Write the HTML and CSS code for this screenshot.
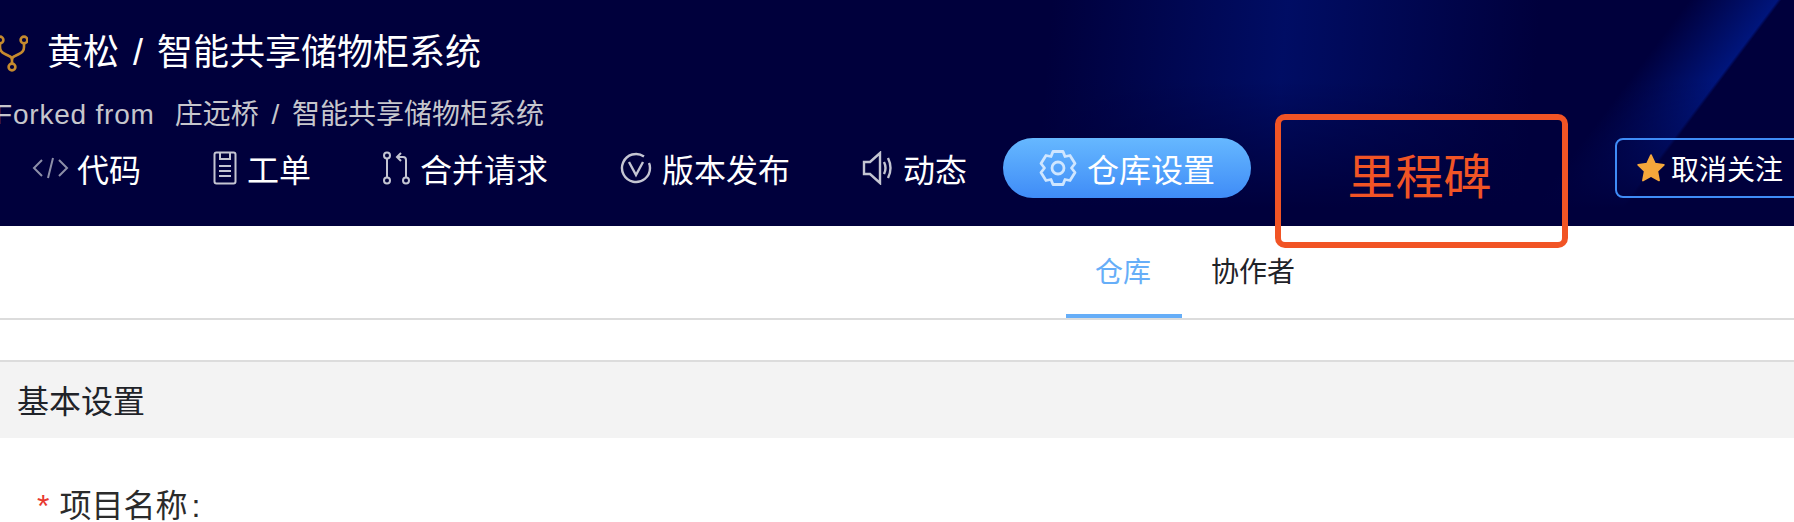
FILE: index.html
```html
<!DOCTYPE html>
<html lang="zh-CN">
<head>
    <meta charset="UTF-8">
    <meta name="viewport" content="width=device-width, initial-scale=1.0">
    <title>仓库设置</title>
    <link rel="stylesheet" href="styles.css">
</head>
<body>
    <header class="repo-header">
        <div class="repo-title">
            <svg class="fork-icon" viewBox="0 0 32 40" fill="none" stroke="#c58a2e" stroke-width="2.6">
                <circle cx="4" cy="6" r="3.4"/>
                <circle cx="28" cy="6" r="3.4"/>
                <circle cx="16" cy="33" r="3.4"/>
                <path d="M4 10v3q0 5 5 7l4 2q3 1 3 4v3M28 10v3q0 5-5 7l-4 2q-3 1-3 4"/>
            </svg>
            <span>黄松 / 智能共享储物柜系统</span>
        </div>
        <div class="repo-fork"><span class="fork-label">Forked from</span><span class="fork-name">庄远桥 / 智能共享储物柜系统</span></div>
        <nav class="repo-nav">
            <a class="nav-item">
                <svg class="nav-icon icon-code" viewBox="0 0 37 24" fill="none" stroke="#8d8fa8" stroke-width="2">
                    <path d="M10 4 2 12l8 8M27 4l8 8-8 8M21 2l-5 20"/>
                </svg>
                代码
            </a>
            <a class="nav-item">
                <svg class="nav-icon icon-issue" viewBox="0 0 24 34" fill="none" stroke="#c4c5d2" stroke-width="2">
                    <rect x="1.5" y="1.5" width="21" height="31" rx="2"/>
                    <path d="M7 2v6h10V2M6 15h12M6 20h12M6 25h12"/>
                </svg>
                工单
            </a>
            <a class="nav-item">
                <svg class="nav-icon icon-merge" viewBox="0 0 27 34" fill="none" stroke="#c4c5d2" stroke-width="2">
                    <circle cx="4" cy="4.500" r="3"/>
                    <circle cx="4" cy="29.500" r="3"/>
                    <circle cx="23" cy="29.500" r="3"/>
                    <path d="M4 8v18M23 26V9q0-3-3-3h-5M18 2l-4 4 4 4"/>
                </svg>
                合并请求
            </a>
            <a class="nav-item">
                <svg class="nav-icon icon-version" viewBox="0 0 32 32" fill="none" stroke="#c4c5d2" stroke-width="2.400">
                    <path d="M24 4.500A14 14 0 1 0 30 16q0-3-1-5"/>
                    <path d="M9 10l7 13 7-13"/>
                </svg>
                版本发布
            </a>
            <a class="nav-item">
                <svg class="nav-icon icon-sound" viewBox="0 0 31 34" fill="none" stroke="#c4c5d2" stroke-width="2.400">
                    <path d="M2 11h6L18 2v30L8 23H2z"/>
                    <path d="M22 11q3 6 0 12M26 7q5 10 0 20"/>
                </svg>
                动态
            </a>
            <a class="nav-item nav-item-active">
                <svg class="nav-icon icon-gear" viewBox="0 0 38 38" fill="none" stroke="#cfe6ff" stroke-width="2.800">
                    <path d="M14 2.500h10l2 5 5-1 5 8-3.500 4.500 3.500 4.500-5 8-5-1-2 5H14l-2-5-5 1-5-8 3.500-4.500L2 14.500l5-8 5 1z" stroke-linejoin="round"/>
                    <circle cx="19" cy="19" r="6"/>
                </svg>
                仓库设置
            </a>
            <a class="follow-btn">
                <svg class="star-icon" viewBox="0 0 24 24"><path d="M12 1l3.400 7.300 7.600 1-5.600 5.400 1.500 8L12 18.800 5.100 22.700l1.500-8L1 9.300l7.600-1z" fill="#f5a73b" stroke="#f5a73b" stroke-width="1.500" stroke-linejoin="round"/></svg>
                取消关注
            </a>
        </nav>
    </header>

    <div class="tabs">
        <a class="tab tab-active">仓库</a>
        <a class="tab">协作者</a>
    </div>

    <section class="panel">
        <h2 class="panel-title">基本设置</h2>
        <div class="form-row"><span class="required">*</span>项目名称<span class="colon">:</span></div>
    </section>

    <div class="callout">里程碑</div>
</body>
</html>
```

FILE: styles.css
```css
body {
    font-family: "Liberation Sans", "Noto Sans CJK SC", sans-serif;
    margin: 0;
    padding: 0;
    height: 522px;
    overflow: hidden;
    background-color: white;
    color: #1f2329;
    position: relative;
}
.repo-header {
    height: 226px;
    box-sizing: border-box;
    padding-top: 28px;
    color: white;
    background-color: #00003c;
    background-image:
        linear-gradient(to bottom, rgba(0, 0, 60, 0) 35%, rgba(0, 0, 60, 1) 92%),
        linear-gradient(127deg, rgba(0, 30, 150, 0) 86%, rgba(0, 30, 150, 0.7) 90.5%, rgba(0, 30, 150, 0) 90.7%),
        linear-gradient(95deg, rgba(0, 16, 110, 0) 58%, rgba(0, 16, 110, 0.8) 71%, rgba(0, 16, 110, 0) 85%);
}
.repo-title {
    display: flex;
    align-items: center;
    height: 42px;
    font-size: 36px;
    word-spacing: 4px;
    margin-left: -4px;
}
.fork-icon {
    width: 32px;
    height: 40px;
    margin-right: 19px;
    margin-top: 10px;
}
.repo-fork {
    font-size: 28px;
    color: #c6c6cc;
    margin-top: 24px;
    margin-left: -5px;
    line-height: 42px;
    white-space: nowrap;
}
.fork-label {
    letter-spacing: 0.8px;
    margin-right: 20px;
}
.fork-name {
    word-spacing: 5px;
}
.repo-nav {
    display: flex;
    align-items: center;
    margin-left: -4px;
    height: 60px;
    margin-top: 2px;
}
.nav-item {
    display: flex;
    align-items: center;
    height: 60px;
    padding: 0 36px;
    font-size: 32px;
    white-space: nowrap;
    border-radius: 30px;
}
.nav-item-active {
    background-image: linear-gradient(#66b8ff, #3f8cf7);
}
.nav-icon {
    margin-right: 9px;
    flex-shrink: 0;
}
.icon-code { width: 37px; height: 24px; margin-right: 8px; }
.icon-issue { width: 24px; height: 34px; margin-right: 10px; }
.icon-merge { width: 27px; height: 34px; margin-right: 10px; }
.icon-version { width: 32px; height: 32px; margin-right: 10px; }
.icon-sound { width: 31px; height: 34px; margin-right: 10px; }
.icon-gear { width: 38px; height: 38px; margin-right: 10px; }
.follow-btn {
    display: flex;
    align-items: center;
    margin-left: 364px;
    height: 60px;
    width: 240px;
    flex-shrink: 0;
    box-sizing: border-box;
    padding-left: 20px;
    border: 2px solid #3f8cf7;
    border-radius: 8px;
    font-size: 28px;
    white-space: nowrap;
}
.star-icon {
    width: 28px;
    height: 28px;
    margin-right: 6px;
}
.tabs {
    display: flex;
    justify-content: center;
    height: 94px;
    box-sizing: border-box;
    padding-left: 597px;
    border-bottom: 2px solid #dcdcdc;
}
.tab {
    display: flex;
    align-items: center;
    justify-content: center;
    height: 92px;
    box-sizing: border-box;
    padding: 0 30px 4px 29px;
    font-size: 28px;
}
.tab-active {
    width: 116px;
    color: #66aef8;
    border-bottom: 4px solid #66aef8;
    padding: 0 2px 0 0;
}
.panel {
    margin-top: 40px;
}
.panel-title {
    margin: 0;
    height: 78px;
    box-sizing: border-box;
    padding: 0 0 2px 17px;
    display: flex;
    align-items: center;
    font-size: 32px;
    font-weight: normal;
    background-color: #f3f3f3;
    border-top: 2px solid #dcdcdc;
}
.form-row {
    margin-top: 46px;
    padding-left: 37px;
    font-size: 32px;
    line-height: 44px;
    color: #2b2b2b;
}
.required {
    color: #e8392f;
    margin-right: 10px;
}
.colon {
    margin-left: 4px;
}
.callout {
    position: absolute;
    left: 1275px;
    top: 114px;
    width: 293px;
    height: 134px;
    box-sizing: border-box;
    border: 6px solid #f15425;
    border-radius: 10px;
    display: flex;
    align-items: center;
    justify-content: center;
    padding: 0 4px 16px 0;
    font-size: 48px;
    color: #f15425;
}
```
